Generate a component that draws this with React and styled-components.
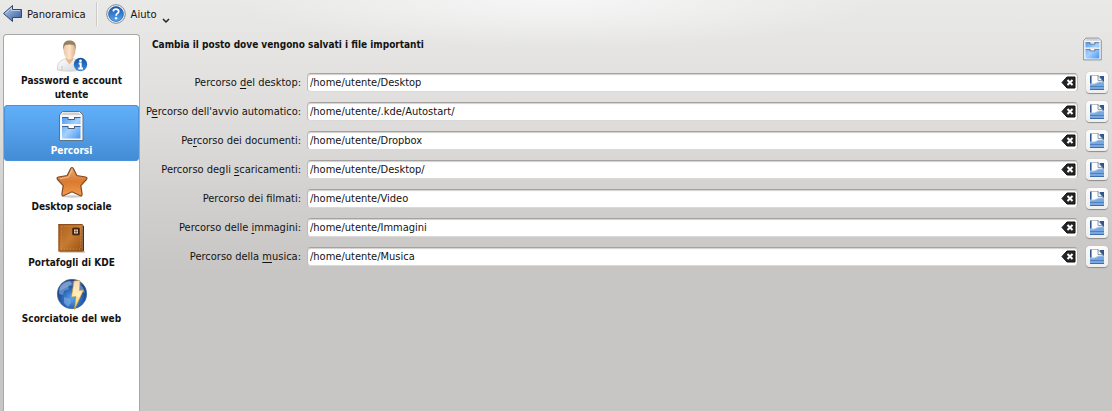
import { useState } from "react";
import styled, { createGlobalStyle } from "styled-components";

const GlobalStyle = createGlobalStyle`
  * {
    box-sizing: border-box;
  }

  body {
    margin: 0;
    font-family: "DejaVu Sans Condensed", "DejaVu Sans", sans-serif;
    font-size: 11px;
    color: #141312;
  }

  button {
    padding: 0;
    border: none;
    background: none;
    color: inherit;
    font: inherit;
    cursor: pointer;
  }

  svg {
    display: block;
    flex: none;
  }
`;

const Page = styled.div`
  display: flex;
  flex-direction: column;
  min-height: 100vh;
  background: radial-gradient(ellipse 320px 48px at 50% 0, #f6f6f6, transparent) no-repeat,
    linear-gradient(#e9e9e8, #e3e2e1 72px, #dddcda 130px, #d1d0cf 200px, #c7c6c4 270px);
`;

const Toolbar = styled.header`
  display: flex;
  align-items: center;
  height: 28px;
  padding-left: 2px;
  font-family: "DejaVu Sans", sans-serif;
  font-size: 10px;
`;

const ToolButton = styled.button`
  display: flex;
  align-items: center;
  gap: 5px;
  height: 28px;
`;

const Separator = styled.div`
  width: 2px;
  height: 24px;
  margin: 0 8px 0 10px;
  border-left: 1px solid #cbcac9;
  border-right: 1px solid #f6f6f6;
`;

const Body = styled.div`
  display: flex;
  flex: 1;
  padding: 6px 4px 0 3px;
`;

const Sidebar = styled.nav`
  flex: none;
  width: 137px;
  border: 1px solid #a9a8a7;
  border-bottom: none;
  border-radius: 4px 4px 0 0;
  background: #fff;
`;

const SideItem = styled.button`
  display: flex;
  flex-direction: column;
  align-items: center;
  gap: 2px;
  width: 100%;
  padding: 5px 12px 3px;
  border-radius: 4px;
  font-size: 10px;
  font-weight: bold;
  line-height: 14px;
  color: ${(props) => (props.$active ? "#fff" : "#141312")};
  background: ${(props) => (props.$active ? "linear-gradient(#62b0fb, #438cd5)" : "none")};
  box-shadow: ${(props) => (props.$active ? "inset 0 0 0 1px #4a92da" : "none")};
`;

const Content = styled.main`
  flex: 1;
  min-width: 0;
  padding-left: 6px;
`;

const TitleRow = styled.div`
  display: flex;
  align-items: flex-start;
  justify-content: space-between;
  height: 37px;
  padding: 3px 3px 0 6px;
`;

const Title = styled.h1`
  margin: 0;
  font-size: 10px;
  line-height: 16px;
`;

const Form = styled.form`
  display: flex;
  flex-direction: column;
  gap: 7px;
`;

const Row = styled.div`
  display: grid;
  grid-template-columns: 155px 1fr 22px;
  align-items: center;
  height: 22px;
`;

const Label = styled.label`
  text-align: right;
  white-space: nowrap;

  u {
    text-underline-offset: 2px;
  }
`;

const Field = styled.div`
  display: flex;
  align-items: center;
  height: 19px;
  margin: 0 8px 0 6px;
  padding-right: 1px;
  border: 1px solid #bdbcbb;
  border-top-color: #a3a2a1;
  border-bottom-color: #dad9d8;
  border-radius: 4px;
  background: #fff;
  box-shadow: inset 0 1px 1px #d2d1d0;
`;

const Input = styled.input`
  flex: 1;
  min-width: 0;
  padding: 0 2px;
  border: none;
  outline: none;
  background: none;
  color: inherit;
  font: inherit;
`;

const BrowseButton = styled.button`
  display: flex;
  align-items: center;
  justify-content: center;
  width: 22px;
  height: 21px;
  border-radius: 4px;
  background: linear-gradient(#fdfdfd, #efeeee);
  box-shadow: 0 1px 1px #8b8a89, 0 0 1px #a5a4a3;
`;

const BackIcon = () => (
  <svg width="20" height="20" viewBox="0 0 20 20" aria-hidden="true">
    <defs>
      <linearGradient id="back" x1="0" y1="0" x2="1" y2="1">
        <stop offset="0" stopColor="#c3d3ec" />
        <stop offset=".5" stopColor="#7393c6" />
        <stop offset="1" stopColor="#34599b" />
      </linearGradient>
    </defs>
    <path d="M1.500 9.500 10.500 1.500V5.500H19.500v8h-9v4z" fill="url(#back)" stroke="#33476c" strokeLinejoin="round" />
    <path d="M3.500 9.200 9.500 3.800V6.500H18" fill="none" stroke="#d9e5f8" strokeOpacity=".7" />
  </svg>
);

const HelpIcon = () => (
  <svg width="20" height="20" viewBox="0 0 20 20" aria-hidden="true">
    <defs>
      <linearGradient id="help" x1="0" y1="0" x2="0" y2="1">
        <stop offset="0" stopColor="#1856ae" />
        <stop offset="1" stopColor="#54a8f2" />
      </linearGradient>
    </defs>
    <circle cx="10" cy="10" r="9.300" fill="#f3f5f8" stroke="#808891" />
    <circle cx="10" cy="10" r="7.500" fill="url(#help)" stroke="#1b509a" strokeWidth=".6" />
    <path d="M7.300 7.400c.2-3.200 5.500-3 5.400.1 0 1.900-2.600 2-2.600 4.200" fill="none" stroke="#fff" strokeWidth="1.800" />
    <circle cx="10.100" cy="14.200" r="1.200" fill="#fff" />
  </svg>
);

const ChevronIcon = () => (
  <svg width="8" height="20" viewBox="0 0 8 20" aria-hidden="true">
    <path d="M1 15l3 3 3-3" fill="none" stroke="#222" strokeWidth="1.500" />
  </svg>
);

const UserIcon = () => (
  <svg width="32" height="32" viewBox="0 0 32 32" aria-hidden="true">
    <defs>
      <linearGradient id="shirt" x1="0" y1="0" x2="1" y2="1">
        <stop offset="0" stopColor="#fff" />
        <stop offset="1" stopColor="#d3d4d7" />
      </linearGradient>
      <linearGradient id="face" x1="0" y1="0" x2="1" y2="0">
        <stop offset="0" stopColor="#eac6a5" />
        <stop offset=".5" stopColor="#fbe2cb" />
        <stop offset="1" stopColor="#dcae86" />
      </linearGradient>
      <linearGradient id="info" x1="0" y1="0" x2="0" y2="1">
        <stop offset="0" stopColor="#164f9e" />
        <stop offset="1" stopColor="#3a8ee0" />
      </linearGradient>
    </defs>
    <path d="M1.500 30C.5 23 4 20.500 10 18.500h7c6 2 9 4.500 8 11.500-6 1.500-18 1.500-23.500 0z" fill="url(#shirt)" stroke="#c5c6ca" strokeWidth=".7" />
    <path d="M10 16h7v4l-3.500 4.500L10 20z" fill="#e4b993" />
    <path d="M6 26v4M21 26v4" stroke="#c9cacd" />
    <path d="M7.500 9c0-9 12-9 12 0 0 6-2.500 10.500-6 10.500S7.500 15 7.500 9z" fill="url(#face)" />
    <path d="M7.500 10C6 2 10 .5 13.500.5S21 2 19.500 10c-.5-3-.7-4-2-5-2.500-.8-5.500-.8-8 0-1.300 1-1.500 2-2 5z" fill="#95805f" />
    <circle cx="24.500" cy="24.500" r="6.700" fill="url(#info)" />
    <circle cx="24.500" cy="20.800" r="1.400" fill="#fff" />
    <path d="M22.700 23.500h2v5M22.300 28.500h4.700" fill="none" stroke="#fff" strokeWidth="2" />
  </svg>
);

const CabinetIcon = ({ size = 32 }) => (
  <svg width={size} height={size} viewBox="0 0 32 32" aria-hidden="true">
    <defs>
      <linearGradient id="drawer" x1="0" y1="0" x2="1" y2="1">
        <stop offset="0" stopColor="#4f9bf0" />
        <stop offset=".5" stopColor="#a5d2ff" />
        <stop offset="1" stopColor="#4795f0" />
      </linearGradient>
    </defs>
    <path d="M3.500 5 6.500 1.500h17l3.500 3.500v25.500h-23.500z" fill="#f4f7fb" stroke="#66717f" strokeLinejoin="round" />
    <path d="M5.500 5 7.500 2.500h15l2.500 2.500z" fill="#cfd0cf" />
    <path d="M6 7.500h18.500v6.500H6zM6 16.500h18.500v12H6z" fill="url(#drawer)" />
    <path d="M6 7.500h18.500M6 16.500h18.500" stroke="#35629d" />
    <path d="M12 7v2.500h6.500V7M12 16v2.500h6.500V16" fill="#fff" stroke="#4c5c72" />
  </svg>
);

const StarIcon = () => (
  <svg width="32" height="32" viewBox="0 0 32 32" aria-hidden="true">
    <defs>
      <linearGradient id="star" x1="0" y1="0" x2="0" y2="1">
        <stop offset="0" stopColor="#e9a975" />
        <stop offset=".5" stopColor="#d97a30" />
        <stop offset="1" stopColor="#f29a4b" />
      </linearGradient>
    </defs>
    <ellipse cx="16" cy="30.500" rx="11" ry="1.200" fill="#c8ccd0" />
    <path d="M16 1.500c.7 0 1.200.5 1.600 1.400l3.200 6.600 8.800 1.500c1.500.3 1.800 1.400.8 2.500l-5.600 6.200 1.300 8.300c.2 1.600-.8 2.200-2.200 1.500L16 25.800l-7.900 3.700c-1.400.7-2.400.1-2.200-1.500l1.300-8.300-5.600-6.200c-1-1.100-.7-2.200.8-2.500l8.800-1.500 3.200-6.600c.4-.9.900-1.400 1.600-1.400z" fill="url(#star)" stroke="#83491e" strokeWidth="1.200" />
    <path d="M16 4l-3.500 7-8.500 1.800" fill="none" stroke="#fbd3ae" strokeOpacity=".7" />
  </svg>
);

const WalletIcon = () => (
  <svg width="32" height="32" viewBox="0 0 32 32" aria-hidden="true">
    <defs>
      <linearGradient id="leather" x1="0" y1="0" x2="1" y2="1">
        <stop offset="0" stopColor="#a95f1d" />
        <stop offset=".5" stopColor="#c67a32" />
        <stop offset="1" stopColor="#98500f" />
      </linearGradient>
    </defs>
    <path d="M4 29.500h25v1H4z" fill="#b8a48e" />
    <path d="M2.500 2h24v27.500h-24z" fill="url(#leather)" />
    <path d="M26.500 3l1.500 1v25h-1.500z" fill="#562b0c" />
    <path d="M2.500 2.500h24M3 2v27.500M3 29h25" stroke="#8d4f1b" />
    <path d="M5.500 4.500h19v22.500h-19z" fill="none" stroke="#dc9a55" strokeDasharray="1 2" strokeOpacity=".7" />
    <rect x="16.500" y="6" width="7" height="7" rx="1" fill="#36190a" stroke="#633614" />
    <path d="M18 7.500h4v4h-4z" fill="#e3d6c6" />
    <path d="M18.500 9.500h3M20 8v3" stroke="#544232" strokeWidth=".7" />
  </svg>
);

const GlobeIcon = () => (
  <svg width="32" height="32" viewBox="0 0 32 32" aria-hidden="true">
    <defs>
      <radialGradient id="globe" cx=".5" cy=".65" r=".55">
        <stop offset="0" stopColor="#5da2e9" />
        <stop offset=".6" stopColor="#2c65b5" />
        <stop offset="1" stopColor="#173c81" />
      </radialGradient>
      <linearGradient id="bolt" x1="0" y1="0" x2="0" y2="1">
        <stop offset="0" stopColor="#fbd7b5" />
        <stop offset=".5" stopColor="#fff0ba" />
        <stop offset="1" stopColor="#f9c22b" />
      </linearGradient>
    </defs>
    <circle cx="16" cy="16" r="14.700" fill="url(#globe)" stroke="#426aa8" strokeWidth=".7" />
    <path d="M3 11c2-5 6-8 11-8l2 3-4 2 1 3-5 2-1 4-4-1zM8 19l6 2 1 4-3 4-4-4zM22 5l5 4 2 6-5-2z" fill="#87b5e5" fillOpacity=".55" />
    <path d="M4 9C8 2 21 0 27 7c-6-1-14 0-23 6z" fill="#fff" fillOpacity=".22" />
    <path d="M18 3l6-.5-.5 10 4-.5L18.500 31.500l1.500-13-4.500.5z" fill="url(#bolt)" stroke="#d79b35" strokeWidth=".6" />
  </svg>
);

const ClearIcon = () => (
  <svg width="15" height="13" viewBox="0 0 15 13" aria-hidden="true">
    <path d="M1 6.500 6 1h8v11H6z" fill="#242526" stroke="#111" strokeLinejoin="round" />
    <path d="M6.500 4l5 5M11.500 4l-5 5" stroke="#fff" strokeWidth="2" />
  </svg>
);

const FolderIcon = () => (
  <svg width="16" height="16" viewBox="0 0 16 16" aria-hidden="true">
    <path d="M1 1.500h2v9H1zM11 2h4v8h-4z" fill="#2f578f" />
    <path d="M2.500 11V1.500h6.500l4.500 5v4z" fill="#fff" stroke="#8b96a5" strokeWidth=".6" />
    <path d="M9 1.500v5h4.500z" fill="#f4f6f8" stroke="#6b7788" strokeWidth=".7" />
    <path d="M1 10h4.500l4.500-2h5v7.500H1z" fill="#79a8df" />
    <path d="M1 10h4.500l4.500-2h5" fill="none" stroke="#a9c9ee" />
    <path d="M1 12.500h14" stroke="#4f81c0" />
    <path d="M1 15.500h14" stroke="#3f6cab" />
  </svg>
);

const sections = [
  { name: "Password e account utente", icon: UserIcon },
  { name: "Percorsi", icon: CabinetIcon },
  { name: "Desktop sociale", icon: StarIcon },
  { name: "Portafogli di KDE", icon: WalletIcon },
  { name: "Scorciatoie del web", icon: GlobeIcon },
];

// "key" is the underlined accelerator, between the two halves of the label
const fields = [
  { id: "desktop", before: "Percorso ", key: "d", after: "el desktop:", path: "/home/utente/Desktop" },
  { id: "autostart", before: "P", key: "e", after: "rcorso dell'avvio automatico:", path: "/home/utente/.kde/Autostart/" },
  { id: "documents", before: "Pe", key: "r", after: "corso dei documenti:", path: "/home/utente/Dropbox" },
  { id: "downloads", before: "Percorso degli ", key: "s", after: "caricamenti:", path: "/home/utente/Desktop/" },
  { id: "videos", before: "Percorso dei filmati:", key: "", after: "", path: "/home/utente/Video" },
  { id: "pictures", before: "Percorso delle ", key: "i", after: "mmagini:", path: "/home/utente/Immagini" },
  { id: "music", before: "Percorso della ", key: "m", after: "usica:", path: "/home/utente/Musica" },
];

function PathRow({ field }) {
  const [path, setPath] = useState(field.path);

  return (
    <Row>
      <Label htmlFor={field.id}>
        {field.before}
        {field.key && <u>{field.key}</u>}
        {field.after}
      </Label>
      <Field>
        <Input id={field.id} type="text" value={path} onChange={(event) => setPath(event.target.value)} />
        <button type="button" aria-label="Cancella" onClick={() => setPath("")}>
          <ClearIcon />
        </button>
      </Field>
      <BrowseButton type="button" aria-label="Sfoglia">
        <FolderIcon />
      </BrowseButton>
    </Row>
  );
}

function App() {
  const [active, setActive] = useState("Percorsi");

  return (
    <>
      <GlobalStyle />
      <Page>
        <Toolbar>
          <ToolButton>
            <BackIcon />
            Panoramica
          </ToolButton>
          <Separator />
          <ToolButton>
            <HelpIcon />
            Aiuto
            <ChevronIcon />
          </ToolButton>
        </Toolbar>
        <Body>
          <Sidebar>
            {sections.map(({ name, icon: Icon }) => (
              <SideItem key={name} $active={name === active} onClick={() => setActive(name)}>
                <Icon />
                {name}
              </SideItem>
            ))}
          </Sidebar>
          <Content>
            <TitleRow>
              <Title>Cambia il posto dove vengono salvati i file importanti</Title>
              <CabinetIcon size={24} />
            </TitleRow>
            <Form>
              {fields.map((field) => (
                <PathRow key={field.id} field={field} />
              ))}
            </Form>
          </Content>
        </Body>
      </Page>
    </>
  );
}

export default App;
